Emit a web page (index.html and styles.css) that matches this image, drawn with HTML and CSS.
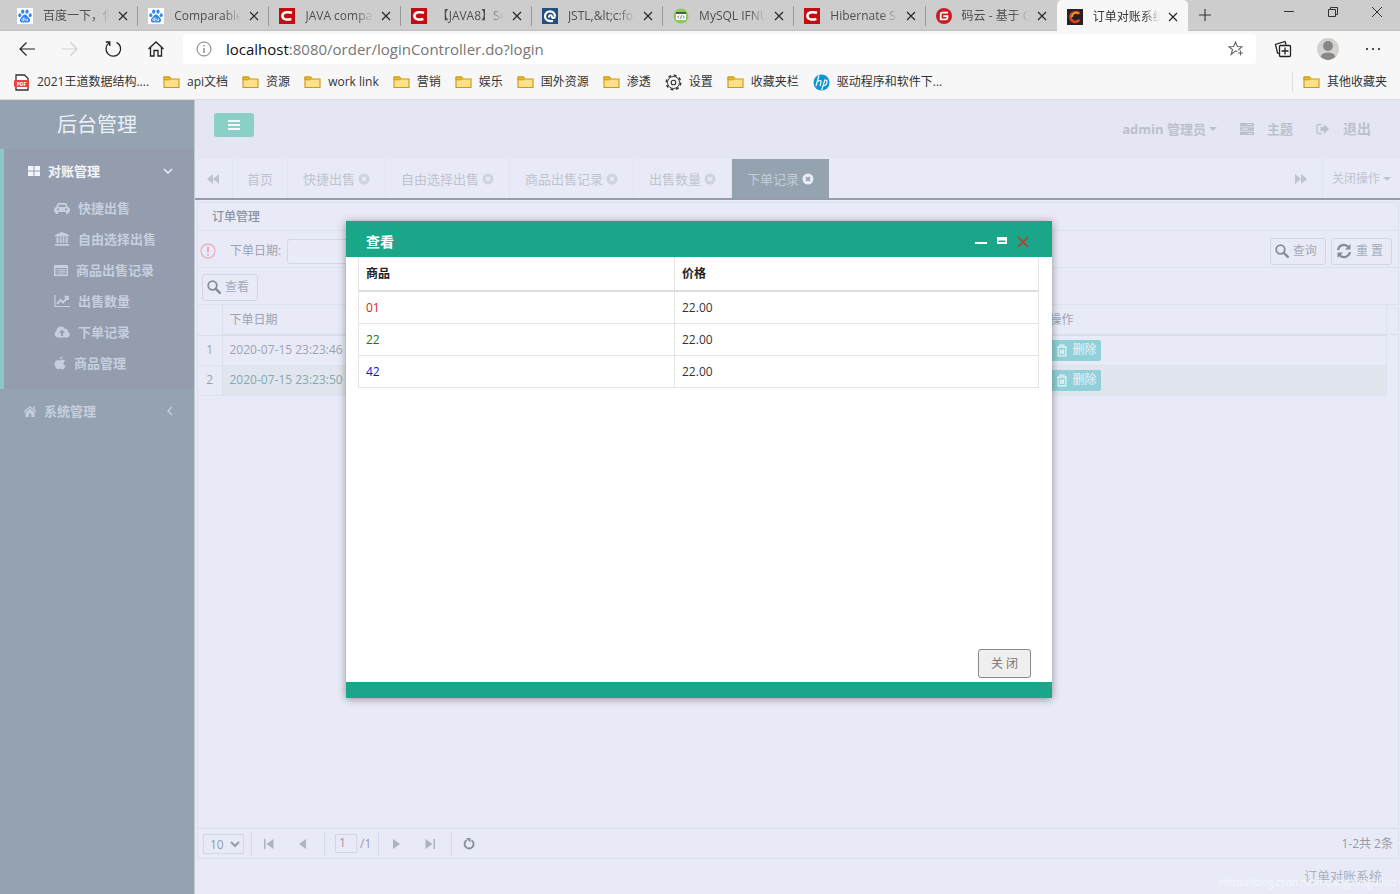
FILE: index.html
```html
<!DOCTYPE html>
<html lang="zh-CN">
<head>
<meta charset="utf-8">
<title>订单对账系统</title>
<link rel="stylesheet" href="styles.css">
</head>
<body>
<svg class="sprite" aria-hidden="true">
  <symbol id="x" viewBox="0 0 10 10"><path d="M1 1l8 8M9 1l-8 8" fill="none" stroke="currentColor" stroke-width="1.1"/></symbol>
  <symbol id="folder" viewBox="0 0 17 14"><path d="M1 12.500V2h5.500l1.500 2H16v8.500z" fill="#ffe08a" stroke="#c99a12" stroke-width="1.1"/><path d="M1 2h5.500l1.200 1.500-1.200 1.300H1z" fill="#eebc2c" stroke="#c99a12"/></symbol>
  <symbol id="baidu" viewBox="0 0 16 16"><path d="M0 0h16v16H0z" fill="#fff"/><g fill="#3385ef"><ellipse cx="5.700" cy="3.600" rx="1.600" ry="2.200"/><ellipse cx="10" cy="3.600" rx="1.600" ry="2.200"/><ellipse cx="2.800" cy="7.200" rx="1.500" ry="1.900"/><ellipse cx="13.200" cy="7.200" rx="1.500" ry="1.900"/><path d="M8 6.500c2 0 2.500 2 4 3.300 1.800 1.600 1.200 4.800-1.300 4.800-1 0-1.700-.3-2.700-.3s-1.700.3-2.700.3c-2.500 0-3.100-3.200-1.300-4.800C5.500 8.500 6 6.500 8 6.500z"/></g><path d="M7 9.300v3.400H5.600c-1.200 0-1.200-2 0-2H7M8.700 10.500v1.600c0 .5.300.6.700.6h1.100v-2.200" fill="none" stroke="#fff" stroke-width=".8"/></symbol>
  <symbol id="csdn" viewBox="0 0 16 16"><path d="M0 0h16v16H0z" fill="#c40d10"/><path d="M13 4.800c-2.300-.8-9.300-1.400-9.600 2.900-.3 4.400 5.300 4.300 9 3.300" fill="none" stroke="#fff" stroke-width="2.500"/></symbol>
  <symbol id="magnifier" viewBox="0 0 14 14"><circle cx="5.500" cy="5.500" r="4.300" fill="none" stroke="currentColor" stroke-width="1.800"/><path d="M8.800 8.800l4 4" stroke="currentColor" stroke-width="2.400" stroke-linecap="round"/></symbol>
  <symbol id="trash" viewBox="0 0 12 13"><path d="M1 3.200h10M4 3V1.200h4V3M2.200 3.500v8.300h7.600V3.500M4.500 5.500v4.500M6 5.500v4.500M7.500 5.500v4.500" fill="none" stroke="currentColor" stroke-width="1.200"/></symbol>
  <symbol id="tabx" viewBox="0 0 12 12"><path fill-rule="evenodd" d="M6 .5a5.500 5.500 0 1 0 0 11A5.500 5.500 0 0 0 6 .5zM4.700 3.400 6 4.700l1.300-1.300 1.300 1.300L7.300 6l1.300 1.300-1.300 1.300L6 7.300 4.700 8.600 3.400 7.300 4.700 6 3.400 4.700z" fill="currentColor"/></symbol>
</svg>

<header class="browser">
  <div class="strip">
    <nav class="wtabs">
      <div class="wtab"><svg class="fav"><use href="#baidu"/></svg><span>百度一下，你就知道</span><button aria-label="关闭标签"><svg><use href="#x"/></svg></button></div>
      <div class="wtab"><svg class="fav"><use href="#baidu"/></svg><span>Comparable 比较</span><button aria-label="关闭标签"><svg><use href="#x"/></svg></button></div>
      <div class="wtab"><svg class="fav"><use href="#csdn"/></svg><span>JAVA comparable</span><button aria-label="关闭标签"><svg><use href="#x"/></svg></button></div>
      <div class="wtab"><svg class="fav"><use href="#csdn"/></svg><span>【JAVA8】Set 排序</span><button aria-label="关闭标签"><svg><use href="#x"/></svg></button></div>
      <div class="wtab"><svg class="fav" viewBox="0 0 16 16"><path d="M0 0h16v16H0z" fill="#234f7e"/><path d="M13 8.500C13 1.500 3.200 1.800 3 8.200 3 12 6 13.500 11 13" fill="none" stroke="#fff" stroke-width="2.200"/><path d="M7 9.500c0-3 3-3 3-.5 0 1.500 3 1.300 3-.5" fill="none" stroke="#fff" stroke-width="2"/></svg><span>JSTL,&amp;lt;c:forEach</span><button aria-label="关闭标签"><svg><use href="#x"/></svg></button></div>
      <div class="wtab"><svg class="fav" viewBox="0 0 16 16"><circle cx="8" cy="8" r="7.500" fill="#8cc957"/><rect x="3" y="4" width="10" height="8" rx="1" fill="#fff"/><path d="M3 4h10v2H3z" fill="#4c5b50"/><path d="M6 7.500 4.700 9 6 10.500M10 7.500 11.300 9 10 10.500M8.500 7.300l-1 3.400" stroke="#4c5b50" stroke-width=".8" fill="none"/></svg><span>MySQL IFNULL</span><button aria-label="关闭标签"><svg><use href="#x"/></svg></button></div>
      <div class="wtab"><svg class="fav"><use href="#csdn"/></svg><span>Hibernate SQL</span><button aria-label="关闭标签"><svg><use href="#x"/></svg></button></div>
      <div class="wtab"><svg class="fav" viewBox="0 0 16 16"><circle cx="8" cy="8" r="8" fill="#c71d23"/><path d="M12 4.700H6.300Q4.700 4.700 4.700 6.300v5h5q1.800 0 1.800-2V8.200H7.300" fill="none" stroke="#fff" stroke-width="1.700"/></svg><span>码云 - 基于 Git</span><button aria-label="关闭标签"><svg><use href="#x"/></svg></button></div>
      <div class="wtab current"><svg class="fav" viewBox="0 0 16 16"><path d="M0 0h16v16H0z" fill="#26212a"/><path d="M12.500 5C10.500 1.800 3.500 3 3.500 8s6 6.500 9 2.800" fill="none" stroke="#d9481c" stroke-width="2.600"/><path d="M11.500 4.500C8 2.500 5 5 5 8" fill="none" stroke="#f6a91f" stroke-width="1.700"/></svg><span>订单对账系统</span><button aria-label="关闭标签"><svg><use href="#x"/></svg></button></div>
    </nav>
    <button class="newtab" aria-label="新建标签"><svg viewBox="0 0 14 14"><path d="M7 1v12M1 7h12" stroke="#333" stroke-width="1.100"/></svg></button>
    <div class="winctl">
      <button aria-label="最小化"><svg viewBox="0 0 12 12"><path d="M1 5.500h10" stroke="#333"/></svg></button>
      <button aria-label="还原"><svg viewBox="0 0 12 12"><path d="M1.500 3.500h7v7h-7zM3.500 3.500v-2h7v7h-2" fill="none" stroke="#333"/></svg></button>
      <button aria-label="关闭"><svg viewBox="0 0 12 12"><path d="M1 1l10 10M11 1 1 11" stroke="#333"/></svg></button>
    </div>
  </div>
  <div class="addressrow">
    <button aria-label="后退"><svg viewBox="0 0 18 18"><path d="M17 9H2M8.500 2.500 2 9l6.500 6.500" fill="none" stroke="#222" stroke-width="1.200"/></svg></button>
    <button aria-label="前进"><svg viewBox="0 0 18 18"><path d="M1 9h15M9.500 2.500 16 9l-6.500 6.500" fill="none" stroke="#d0d0d0" stroke-width="1.200"/></svg></button>
    <button aria-label="刷新"><svg viewBox="0 0 18 18"><path d="M12.500 2.300A7.300 7.300 0 1 1 5 3M1.800 2h4v4" fill="none" stroke="#222" stroke-width="1.300"/></svg></button>
    <button aria-label="主页"><svg viewBox="0 0 18 18"><path d="M1.500 9 9 2l7.500 7M3.500 7.500V16H7v-5.500h4V16h3.500V7.500" fill="none" stroke="#222" stroke-width="1.300"/></svg></button>
    <div class="url">
      <svg class="info" viewBox="0 0 16 16"><circle cx="8" cy="8" r="7" fill="none" stroke="#777"/><path d="M8 7v5M8 4v1.500" stroke="#777" stroke-width="1.200"/></svg>
      <p><b>localhost</b>:8080/order/loginController.do?login</p>
      <button aria-label="收藏"><svg viewBox="0 0 16 16"><path d="M9.300 10.800 7.500 9.800l-4.300 3.700 1.300-5L1 5.800l4.700-.3L7.500 1l1.900 4.500 4.600.3-3.300 2.700.3 1M12.500 9.500v5M10 12h5" fill="none" stroke="#666" stroke-width="1.100"/></svg></button>
    </div>
    <button aria-label="集锦"><svg viewBox="0 0 18 18"><path d="M6.500 5.500h9a1 1 0 0 1 1 1v9a1 1 0 0 1-1 1h-9a1 1 0 0 1-1-1v-9a1 1 0 0 1 1-1zM11 7.500v7M7.500 11h7M5 13.500 3.500 13 1.500 4.500l9.500-3 1 3" fill="none" stroke="#222" stroke-width="1.300"/></svg></button>
    <button class="avatar" aria-label="用户"><svg viewBox="0 0 22 22"><circle cx="11" cy="11" r="11" fill="#d4d2d0"/><circle cx="11" cy="8" r="5" fill="#898785"/><path d="M3.500 18.500c2-5.500 13-5.500 15 0C14 23 8 23 3.500 18.500z" fill="#898785"/></svg></button>
    <button class="more" aria-label="更多"><svg viewBox="0 0 18 18"><g fill="#222"><circle cx="3" cy="9" r="1.100"/><circle cx="9" cy="9" r="1.100"/><circle cx="15" cy="9" r="1.100"/></g></svg></button>
  </div>
  <nav class="bookmarks">
    <a href="#"><svg viewBox="0 0 17 17"><path d="M3 1h8.500L15 4.500V16H3z" fill="#fff" stroke="#333" stroke-width="1.300"/><rect x="1" y="6" width="15" height="7" rx="1" fill="#e9433f"/><text x="8.500" y="11.800" class="pdf">PDF</text></svg>2021王道数据结构....</a>
    <a href="#"><svg><use href="#folder"/></svg>api文档</a>
    <a href="#"><svg><use href="#folder"/></svg>资源</a>
    <a href="#"><svg><use href="#folder"/></svg>work link</a>
    <a href="#"><svg><use href="#folder"/></svg>营销</a>
    <a href="#"><svg><use href="#folder"/></svg>娱乐</a>
    <a href="#"><svg><use href="#folder"/></svg>国外资源</a>
    <a href="#"><svg><use href="#folder"/></svg>渗透</a>
    <a href="#"><svg viewBox="0 0 17 17"><circle cx="8.500" cy="8.500" r="7.200" fill="none" stroke="#333" stroke-width="1.500" stroke-dasharray="3 2.650"/><circle cx="8.500" cy="8.500" r="6" fill="#f7f7f7" stroke="#333"/><circle cx="8.500" cy="8.500" r="2.300" fill="none" stroke="#333" stroke-width="1.100"/></svg>设置</a>
    <a href="#"><svg><use href="#folder"/></svg>收藏夹栏</a>
    <a href="#"><svg viewBox="0 0 17 17"><circle cx="8.500" cy="8.500" r="8" fill="#0a96d6"/><path d="M6 1.500 3 12M4.600 7.500c3-1.800 4-1 3.300 1L7 12M12 5.500 8.700 16M11.800 6.200c3-.6 2.500 1.300 1.500 4-.6 1.500-1.700 1.400-3 1.400" fill="none" stroke="#fff" stroke-width="1.200"/></svg>驱动程序和软件下...</a>
    <a href="#" class="other"><svg><use href="#folder"/></svg>其他收藏夹</a>
  </nav>
</header>

<div class="app">
  <aside class="side">
    <h1>后台管理</h1>
    <section class="group open">
      <a href="#" class="ghead"><svg viewBox="0 0 14 14"><path d="M1 2h5.500v4.500H1zM7.500 2H13v4.500H7.500zM1 7.500h5.500V12H1zM7.500 7.500H13V12H7.500z" fill="currentColor"/></svg><span>对账管理</span><svg class="chev" viewBox="0 0 10 10"><path d="M1 3l4 4 4-4" fill="none" stroke="currentColor" stroke-width="1.300"/></svg></a>
      <ul>
        <li><a href="#"><svg viewBox="0 0 16 14"><path fill-rule="evenodd" d="M3.800 2h8.400l1.700 4Q16 6.500 16 8.500V11h-1.500v2H12v-2H4v2H1.500v-2H0V8.500Q0 6.500 2.100 6zM5 3.700 4.200 6h7.600L11 3.700zM3 7.500v1.700h2V7.500zM11 7.500v1.700h2V7.500z" fill="currentColor"/></svg>快捷出售</a></li>
        <li><a href="#"><svg viewBox="0 0 16 14"><path d="M8 0l7 3v1.500H1V3zM2.500 5.300h2V11h-2zM5.800 5.300h1.700V11H5.800zM8.700 5.300h1.700V11H8.700zM11.700 5.300h2V11h-2zM1 12h14v1.800H1z" fill="currentColor"/></svg>自由选择出售</a></li>
        <li><a href="#"><svg class="mid" viewBox="0 0 14 14"><path fill-rule="evenodd" d="M0 2h14v11H0zM1.500 5v6.500h11V5zM2.500 6h1.200v1H2.500zM4.500 6h7v1h-7zM2.500 7.800h1.200v1H2.500zM4.500 7.800h7v1h-7zM2.500 9.500h1.200v1H2.500zM4.500 9.500h7v1h-7z" fill="currentColor"/></svg>商品出售记录</a></li>
        <li><a href="#"><svg viewBox="0 0 16 14"><path d="M1 1v11.500h15" fill="none" stroke="currentColor" stroke-width="1.200"/><path d="M3 10 6.500 6l2.500 2.500 4.500-5M10.500 2.800H14V6" fill="none" stroke="currentColor" stroke-width="1.900"/></svg>出售数量</a></li>
        <li><a href="#"><svg viewBox="0 0 16 14"><path fill-rule="evenodd" d="M4 12.500a3.500 3.500 0 0 1-1.500-6.600C2.300 1.500 9-.2 10.800 4c2-.8 3.200.5 2.800 2.400 3.200.8 2.800 6.100-.6 6.100zM8 4.500 4.800 8H7v3h2V8h2.200z" fill="currentColor"/></svg>下单记录</a></li>
        <li><a href="#"><svg class="narrow" viewBox="0 0 12 14"><path d="M8.500.3C8.600 2 7.300 3.500 6 3.500 5.800 2 7 .6 8.500.3zM6.200 4.400c.8 0 1.500-.7 2.700-.6 1 0 1.700.5 2.200 1.200-2.300 1.400-1.800 4.200.4 5-.6 1.500-1.600 3.300-2.900 3.300-.9 0-1.200-.5-2.200-.5-1.100 0-1.400.5-2.300.5C2.400 13.300.6 10.500.6 7.800c0-4 3.900-4.500 5.600-3.400z" fill="currentColor"/></svg>商品管理</a></li>
      </ul>
    </section>
    <section class="group">
      <a href="#" class="ghead"><svg viewBox="0 0 14 14"><path d="M7 2l6.500 5.500-.8 1L7 3.800 1.300 8.500l-.8-1zM7 4.800 11.500 8.500V13H8.300V9.500H5.700V13H2.500V8.500zM10.300 2.500H12v3l-1.700-1.400z" fill="currentColor"/></svg><span>系统管理</span><svg class="chev" viewBox="0 0 10 10"><path d="M7 1 3 5l4 4" fill="none" stroke="currentColor" stroke-width="1.300"/></svg></a>
    </section>
  </aside>

  <main class="main">
    <div class="topbar">
      <button class="burger" aria-label="菜单"><svg viewBox="0 0 14 12"><path d="M1 2h12M1 6h12M1 10h12" stroke="#f4f8fc" stroke-width="1.800"/></svg></button>
      <a href="#" class="user">admin 管理员<i class="caret"></i></a>
      <a href="#"><svg viewBox="0 0 16 14"><path fill-rule="evenodd" d="M1 1h14v3.400H1zM1 5.300h14v3.400H1zM1 9.600h14V13H1zM8 2.300v.8h5v-.8zM3 6.600v.8h6v-.8zM9 10.900v.8h4v-.8z" fill="currentColor"/></svg>主题</a>
      <a href="#" class="exit"><svg viewBox="0 0 16 14"><path d="M6.500 2.500H4Q2 2.500 2 4.500v5q0 2 2 2h2.500" fill="none" stroke="currentColor" stroke-width="1.400"/><path d="M5.500 5H9V2.300L14 7 9 11.700V9H5.500z" fill="currentColor"/></svg>退出</a>
    </div>
    <nav class="tabs">
      <button class="roll" aria-label="向左"><svg viewBox="0 0 12 10"><path d="M6 0v10L0 5zM12 0v10L6 5z" fill="currentColor"/></svg></button>
      <a href="#" class="home">首页</a>
      <a href="#">快捷出售<svg><use href="#tabx"/></svg></a>
      <a href="#">自由选择出售<svg><use href="#tabx"/></svg></a>
      <a href="#">商品出售记录<svg><use href="#tabx"/></svg></a>
      <a href="#">出售数量<svg><use href="#tabx"/></svg></a>
      <a href="#" class="active">下单记录<svg><use href="#tabx"/></svg></a>
      <button class="roll right" aria-label="向右"><svg viewBox="0 0 12 10"><path d="M0 0v10l6-5zM6 0v10l6-5z" fill="currentColor"/></svg></button>
      <button class="closeops">关闭操作<i class="caret"></i></button>
    </nav>
    <section class="panel">
      <h2>订单管理</h2>
      <form class="search">
        <svg class="warn" viewBox="0 0 16 16"><circle cx="8" cy="8" r="7" fill="none" stroke="#e9b0bd" stroke-width="1.300"/><path d="M8 3.500v6M8 11v1.600" stroke="#e59dac" stroke-width="1.600"/></svg>
        <label for="date">下单日期:</label><input id="date" type="text">
        <button type="button" class="btn query"><svg><use href="#magnifier"/></svg>查询</button>
        <button type="button" class="btn reset"><svg viewBox="0 0 16 16"><path d="M2 7a6 6 0 0 1 10.500-3M14 9a6 6 0 0 1-10.500 3" fill="none" stroke="currentColor" stroke-width="2.200"/><path d="M14.500 1v5.500H9zM1.500 15V9.500H7z" fill="currentColor"/></svg>重 置</button>
      </form>
      <div class="tools"><button class="btn"><svg><use href="#magnifier"/></svg>查看</button></div>
      <div class="gridwrap">
        <table class="grid">
          <thead><tr><th class="num"></th><th>下单日期</th><th class="op">操作</th></tr></thead>
          <tbody>
            <tr><td class="num">1</td><td>2020-07-15 23:23:46</td><td class="op"><button class="del"><svg><use href="#trash"/></svg>删除</button></td></tr>
            <tr class="sel"><td class="num">2</td><td>2020-07-15 23:23:50</td><td class="op"><button class="del"><svg><use href="#trash"/></svg>删除</button></td></tr>
          </tbody>
        </table>
      </div>
      <div class="pager">
        <select aria-label="每页条数"><option>10</option></select>
        <i class="sep"></i>
        <button aria-label="首页"><svg viewBox="0 0 10 10"><path d="M0 0h1.500v10H0zM9.500 0v10L2.500 5z" fill="currentColor"/></svg></button>
        <button aria-label="上一页"><svg viewBox="0 0 10 10"><path d="M8 0v10L1 5z" fill="currentColor"/></svg></button>
        <i class="sep"></i>
        <label class="page"><input type="text" value="1" aria-label="页码">/1</label>
        <i class="sep"></i>
        <button aria-label="下一页"><svg viewBox="0 0 10 10"><path d="M2 0v10l7-5z" fill="currentColor"/></svg></button>
        <button aria-label="末页"><svg viewBox="0 0 10 10"><path d="M10 0H8.500v10H10zM.5 0v10l7-5z" fill="currentColor"/></svg></button>
        <i class="sep"></i>
        <button class="reload" aria-label="刷新"><svg viewBox="0 0 12 12"><path d="M8.500 2.200A4.500 4.500 0 1 1 4 2" fill="none" stroke="currentColor" stroke-width="1.900"/><path d="M3 0h4.500v4.500z" fill="currentColor"/></svg></button>
        <span class="total">1-2共 2条</span>
      </div>
    </section>
    <footer class="foot">订单对账系统<span class="mark">https://blog.csdn.net/huangmingtaiuo</span></footer>
  </main>

  <div class="overlay">
    <div class="dialog" role="dialog" aria-labelledby="dt">
      <header><h3 id="dt">查看</h3>
        <button aria-label="最小化"><svg viewBox="0 0 12 12"><path d="M0 7h12" stroke="#fff" stroke-width="2"/></svg></button>
        <button aria-label="最大化"><svg viewBox="0 0 12 12"><path fill-rule="evenodd" d="M1 1h10v7H1zM2.500 4.500v1.500h7V4.500z" fill="#fff"/></svg></button>
        <button aria-label="关闭"><svg viewBox="0 0 12 12"><path d="M1 1l10 10M11 1 1 11" stroke="#c4392a" stroke-width="1.700"/></svg></button>
      </header>
      <div class="dbody">
        <table>
          <thead><tr><th class="goods">商品</th><th>价格</th></tr></thead>
          <tbody>
            <tr><td class="red">01</td><td>22.00</td></tr>
            <tr><td class="green">22</td><td>22.00</td></tr>
            <tr><td class="blue">42</td><td>22.00</td></tr>
          </tbody>
        </table>
      </div>
      <div class="dfoot"><button>关 闭</button></div>
    </div>
  </div>
</div>
</body>
</html>
```
FILE: styles.css
```css
* { box-sizing: border-box; }
body {
  margin: 0;
  min-height: 100vh;
  display: flex;
  flex-direction: column;
  font: 12px/20px "Open Sans", "Noto Sans CJK SC", sans-serif;
  color: #9da2b0;
}
h1, h2, h3, p, ul { margin: 0; padding: 0; }
ul { list-style: none; }
a { color: inherit; text-decoration: none; }
button { font: inherit; color: inherit; background: none; border: 0; padding: 0; }
svg { display: block; flex: none; }
button { display: flex; align-items: center; justify-content: center; }
.sprite { position: absolute; width: 0; height: 0; }

/* browser frame */
.browser { background: #f7f7f7; border-bottom: 1px solid #d8dadd; color: #333; }
.strip { display: flex; height: 31px; background: #cdcdcd; border-bottom: 1px solid #c0c0c0; }
.wtabs { display: grid; grid-template-columns: repeat(9, minmax(0, 1fr)); flex: 0 1 1188px; padding-left: 7px; }
.wtab { display: flex; align-items: center; padding: 0 9px 0 10px; border-right: 1px solid #999; margin: 6px 0; color: #505050; }
.wtab:nth-child(8) { border-right-color: transparent; }
.wtab.current { background: #f7f7f7; border: 0; border-radius: 5px 5px 0 0; margin: 0 0 -1px; color: #333; padding-right: 10px; }
.fav { width: 16px; height: 16px; margin-right: 10px; }
.wtab span { flex: 1; min-width: 0; overflow: hidden; white-space: nowrap; mask-image: linear-gradient(90deg, #000 75%, transparent); }
.wtab button { width: 10px; height: 20px; margin-left: 8px; color: #222; }
.wtab button svg { width: 10px; height: 10px; }
.newtab { width: 34px; }
.newtab svg { width: 14px; height: 14px; }
.winctl { margin-left: auto; display: flex; gap: 32px; padding: 0 17px 7px 0; }
.winctl svg { width: 12px; height: 12px; }
.addressrow { display: flex; align-items: center; height: 36px; padding: 0 18px; gap: 25px; }
.addressrow svg { width: 18px; height: 18px; }
.url { flex: 1; display: flex; align-items: center; height: 30px; background: #fff; border-radius: 4px; padding: 0 12px 0 13px; margin: 0 -7px 0 -7px; color: #767676; font-size: 15px; }
.url p { flex: 1; padding-left: 14px; }
.url b { font-weight: 400; color: #111; }
.url svg { width: 16px; height: 16px; }
.addressrow .avatar svg { width: 22px; height: 22px; }
.bookmarks { display: flex; align-items: center; gap: 14px; height: 32px; padding: 0 13px 2px; }
.bookmarks a { display: flex; align-items: center; gap: 7px; white-space: nowrap; }
.bookmarks svg { width: 17px; height: 17px; }
.bookmarks svg:has(use) { height: 14px; }
.bookmarks .other { margin-left: auto; border-left: 1px solid #ddd; padding-left: 10px; }
.pdf { font: bold 5px "Open Sans", sans-serif; fill: #fff; text-anchor: middle; }

/* sidebar */
.app { flex: 1; display: flex; position: relative; background: #e8ebf7; }
.side { width: 195px; flex: none; background: #95a2b0; border-right: 1px solid #c3cad6; color: #c6cfde; font-size: 13px; font-weight: 700; }
.side h1 { height: 49px; line-height: 49px; text-align: center; font-size: 20px; font-weight: 400; color: #eaf0fa; }
.group { border-left: 4px solid transparent; }
.group.open { background: #939dad; border-left-color: #8bc8c6; padding-bottom: 11px; }
.ghead { display: flex; align-items: center; height: 44px; padding: 0 19px; gap: 7px; }
.open .ghead { height: 43px; color: #f1f5fc; padding: 0 21px 0 23px; }
.ghead svg { width: 14px; height: 14px; }
.ghead .chev { width: 10px; height: 10px; margin-left: auto; }
.side li a { display: flex; align-items: center; height: 31px; padding-left: 50px; gap: 8px; }
.side li svg { width: 16px; height: 14px; }
.side li .mid { width: 14px; }
.side li .narrow { width: 12px; }

/* header */
.main { flex: 1; min-width: 0; display: flex; flex-direction: column; }
.topbar { display: flex; align-items: center; height: 59px; background: #e4e7f3; padding: 0 29px 2px 19px; font-size: 13px; font-weight: 700; color: #bcc0cd; gap: 22px; }
.topbar a { display: flex; align-items: center; gap: 12px; }
.topbar a svg { width: 16px; height: 14px; }
.topbar .user { margin-left: auto; gap: 3px; }
.topbar .exit { font-size: 14px; }
.burger { width: 40px; height: 24px; border-radius: 3px; background: #8bd0c6; margin-bottom: 7px; }
.burger svg { width: 14px; height: 12px; }
.caret { border: 4px solid transparent; border-top-color: currentColor; border-bottom: 0; }
.tabs { display: flex; height: 41px; border-bottom: 2px solid #959cac; color: #bfc3d0; font-size: 13px; }
.tabs a { display: flex; align-items: center; gap: 3px; padding: 0 15px; border-right: 1px solid #e0e4f0; white-space: nowrap; }
.tabs .home { padding: 0 14px; }
.tabs a svg { width: 12px; height: 12px; color: #cfd3df; }
.tabs .active { background: #95a2b0; color: #c3ccd9; border: 0; }
.tabs .active svg { color: #e8edf6; }
.roll { width: 38px; padding-right: 2px; border-right: 1px solid #e0e4f0; }
.roll svg { width: 12px; height: 10px; }
.roll.right { margin-left: auto; width: 44px; padding: 0; }
.closeops { width: 77px; gap: 3px; font-size: 12px; white-space: nowrap; }

/* order panel */
.panel { flex: 1; display: flex; flex-direction: column; margin: 2px 1px 0 2px; border: 1px solid #dde1ed; }
.panel h2 { height: 28px; line-height: 28px; padding-left: 14px; font-size: 12px; font-weight: 500; color: #8d92a0; border-bottom: 1px solid #dde1ed; }
.search { display: flex; align-items: center; height: 37px; padding: 4px 6px 0 2px; border-bottom: 1px solid #dde1ed; }
.warn { width: 16px; height: 16px; margin-right: 14px; }
.search input { width: 150px; height: 25px; margin-left: 6px; border: 1px solid #d4d8e5; border-radius: 3px; background: #e9ecf8; }
.btn { height: 27px; padding: 0 8px 0 4px; gap: 4px; border: 1px solid #d3d7e3; border-radius: 3px; color: #a5aab7; white-space: nowrap; }
.btn svg { width: 14px; height: 14px; color: #868b99; }
.query { margin-left: auto; }
.reset { margin-left: 5px; }
.reset svg { width: 16px; height: 16px; }
.tools { display: flex; align-items: center; height: 37px; padding: 2px 0 0 4px; border-bottom: 1px solid #dde1ed; }
.gridwrap { flex: 1; background: linear-gradient(#dadeea, #dadeea) 0 29px / 100% 1px no-repeat; }
.grid { width: calc(100% - 11px); border-collapse: collapse; table-layout: fixed; }
.grid th, .grid td { height: 30px; padding: 0 7px; text-align: left; font-weight: 400; border-bottom: 1px solid #dfe3ef; }
.grid th { border-color: #dadeea; }
.grid .num { width: 24px; padding: 0; text-align: center; border-right: 1px solid #dadeea; background: #e8ebf7; }
.grid .op { width: 344px; border-right: 1px solid #dfe3ef; }
.sel { background: #e1e5ee; color: #84a9b0; }
.sel .num { color: #9da2b0; }
.del { width: 51px; height: 21px; padding: 0 0 0 3px; gap: 4px; border-radius: 2px; background: #90d1d9; color: #e6f4f9; }
.del svg { width: 12px; height: 13px; }
.pager { display: flex; align-items: center; height: 30px; padding: 0 5px; border-top: 1px solid #d9ddea; color: #959aa8; }
.pager select { width: 41px; height: 20px; padding: 0 2px; border: 1px solid #d4d8e5; background: none; font: inherit; line-height: 16px; color: inherit; }
.sep { width: 1px; height: 22px; background: #d6dae6; margin: 0 7px; }
.pager button { width: 20px; height: 20px; color: #aeb3c1; margin-right: 14px; }
.pager button:has(+ .sep) { margin-right: 4px; }
.pager .reload { color: #898e9b; margin: 0; }
.pager svg { width: 10px; height: 10px; }
.pager .reload svg { width: 12px; height: 12px; }
.page { display: flex; gap: 3px; padding-left: 3px; }
.page input { width: 22px; height: 19px; padding: 0 3px; border: 1px solid #d4d8e5; background: none; font: inherit; color: inherit; }
.total { margin-left: auto; }
.foot { position: relative; height: 35px; line-height: 35px; padding-right: 18px; text-align: right; font-size: 13px; color: #abb0bc; }
.mark { position: absolute; right: 4px; top: 6px; font-size: 10px; color: #f4f6fc; }

/* dialog */
.overlay { position: absolute; inset: 0; display: flex; justify-content: center; align-items: flex-start; padding: 121px 2px 0 0; }
.dialog { width: 706px; height: 477px; display: flex; flex-direction: column; background: #fff; border-bottom: 16px solid #19a689; box-shadow: 0 1px 8px rgba(0, 0, 0, .4); color: #333; }
.dialog header { display: flex; align-items: center; gap: 9px; height: 36px; padding: 5px 23px 0 20px; background: #19a689; color: #fff; }
.dialog h3 { flex: 1; font-size: 14px; font-weight: 700; }
.dialog header svg { width: 12px; height: 12px; }
.dbody { flex: 1; padding: 0 13px 0 12px; }
.dbody table { width: 100%; border-collapse: collapse; }
.dbody th, .dbody td { height: 32px; padding: 1px 7px 0; text-align: left; border: 1px solid #e5e5e5; }
.dbody thead th { height: 34px; border-top: 0; border-bottom: 2px solid #ddd; color: #222; }
.goods { width: 316px; }
.dbody .red { color: #e02020; }
.dbody .green { color: #137a13; }
.dbody .blue { color: #1212d8; }
.dfoot { display: flex; justify-content: flex-end; padding: 0 21px 4px; }
.dfoot button { width: 53px; height: 29px; border: 1px solid #888; border-radius: 3px; background: #efefef; color: #777; }
```
